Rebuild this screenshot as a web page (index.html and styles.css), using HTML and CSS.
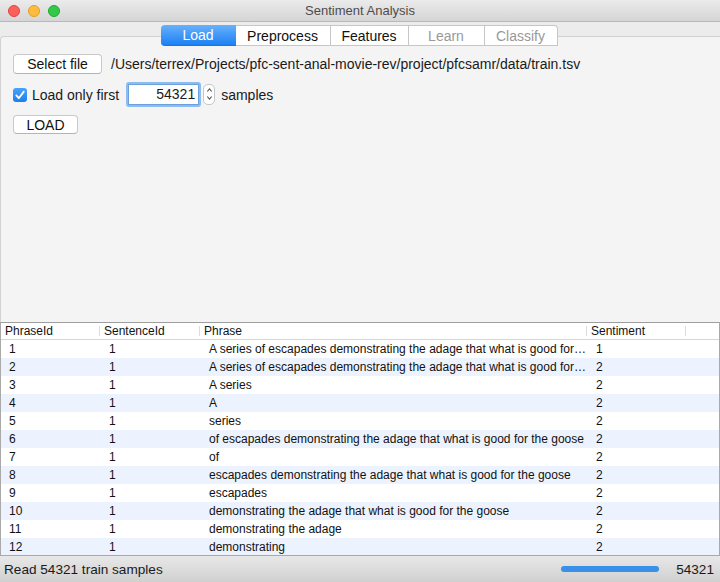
FILE: index.html
```html
<!DOCTYPE html>
<html>
<head>
<meta charset="utf-8">
<link rel="stylesheet" href="styles.css">
</head>
<body>
<div class="window">
  <div class="titlebar">
    <div class="lights">
      <span class="light red"></span><span class="light yellow"></span><span class="light green"></span>
    </div>
    <div class="title">Sentiment Analysis</div>
  </div>
  <div class="top">
    <div class="tabs">
      <div class="tab tab-load active">Load</div>
      <div class="tab tab-pre">Preprocess</div>
      <div class="tab tab-feat">Features</div>
      <div class="tab tab-learn disabled">Learn</div>
      <div class="tab tab-class disabled">Classify</div>
    </div>
    <div class="pane">
      <div class="row">
        <button class="btn btn-select">Select file</button>
        <span class="path">/Users/terrex/Projects/pfc-sent-anal-movie-rev/project/pfcsamr/data/train.tsv</span>
      </div>
      <div class="row row-check">
        <span class="checkbox"><svg width="14" height="14" viewBox="0 0 14 14"><path d="M3.3 7.4 L5.8 10.2 L10.8 3.6" fill="none" stroke="#fff" stroke-width="1.8" stroke-linecap="round" stroke-linejoin="round"/></svg></span>
        <span class="label">Load only first</span>
        <span class="focus"><span class="input">54321</span></span>
        <span class="spinner"><svg width="11" height="20" viewBox="0 0 11 20"><path d="M3.3 7.5 L5.5 4.8 L7.7 7.5" fill="none" stroke="#555" stroke-width="1.1"/><path d="M3.3 12.5 L5.5 15.2 L7.7 12.5" fill="none" stroke="#555" stroke-width="1.1"/></svg></span>
        <span class="label">samples</span>
      </div>
      <div class="row">
        <button class="btn btn-load">LOAD</button>
      </div>
    </div>
  </div>
  <div class="table">
    <div class="thead">
      <div class="th">PhraseId</div>
      <div class="th">SentenceId</div>
      <div class="th">Phrase</div>
      <div class="th">Sentiment</div>
      <div class="th th-last"></div>
    </div>
    <div class="tr"><div class="td">1</div><div class="td">1</div><div class="td phrase">A series of escapades demonstrating the adage that what is good for…</div><div class="td">1</div><div class="td"></div></div>
    <div class="tr"><div class="td">2</div><div class="td">1</div><div class="td phrase">A series of escapades demonstrating the adage that what is good for…</div><div class="td">2</div><div class="td"></div></div>
    <div class="tr"><div class="td">3</div><div class="td">1</div><div class="td phrase">A series</div><div class="td">2</div><div class="td"></div></div>
    <div class="tr"><div class="td">4</div><div class="td">1</div><div class="td phrase">A</div><div class="td">2</div><div class="td"></div></div>
    <div class="tr"><div class="td">5</div><div class="td">1</div><div class="td phrase">series</div><div class="td">2</div><div class="td"></div></div>
    <div class="tr"><div class="td">6</div><div class="td">1</div><div class="td phrase">of escapades demonstrating the adage that what is good for the goose</div><div class="td">2</div><div class="td"></div></div>
    <div class="tr"><div class="td">7</div><div class="td">1</div><div class="td phrase">of</div><div class="td">2</div><div class="td"></div></div>
    <div class="tr"><div class="td">8</div><div class="td">1</div><div class="td phrase">escapades demonstrating the adage that what is good for the goose</div><div class="td">2</div><div class="td"></div></div>
    <div class="tr"><div class="td">9</div><div class="td">1</div><div class="td phrase">escapades</div><div class="td">2</div><div class="td"></div></div>
    <div class="tr"><div class="td">10</div><div class="td">1</div><div class="td phrase">demonstrating the adage that what is good for the goose</div><div class="td">2</div><div class="td"></div></div>
    <div class="tr"><div class="td">11</div><div class="td">1</div><div class="td phrase">demonstrating the adage</div><div class="td">2</div><div class="td"></div></div>
    <div class="tr"><div class="td">12</div><div class="td">1</div><div class="td phrase">demonstrating</div><div class="td">2</div><div class="td"></div></div>
  </div>
  <div class="statusbar">
    <span class="status-text">Read 54321 train samples</span>
    <span class="progress"></span>
    <span class="status-count">54321</span>
  </div>
</div>
</body>
</html>
```

FILE: styles.css
```css
* { box-sizing: border-box; }
html, body { margin: 0; padding: 0; }
body {
  font-family: "Liberation Sans", Arial, sans-serif;
  font-size: 14px;
  color: #1a1a1a;
  background: #ececec;
}
.window {
  width: 720px;
  height: 582px;
  display: flex;
  flex-direction: column;
  overflow: hidden;
}
.titlebar {
  height: 22px;
  flex: none;
  background: linear-gradient(#ebebeb, #d5d5d5);
  border-bottom: 1px solid #b8b8b8;
  display: flex;
  align-items: center;
  position: relative;
}
.lights {
  display: flex;
  gap: 8px;
  padding-left: 8px;
}
.light {
  width: 12px;
  height: 12px;
  border-radius: 50%;
  display: block;
}
.red { background: #fc605c; border: 1px solid #e0443e; }
.yellow { background: #fdbc40; border: 1px solid #dea123; }
.green { background: #34c84a; border: 1px solid #1aab29; }
.title {
  position: absolute;
  left: 0; right: 0; top: 0;
  line-height: 21px;
  text-align: center;
  color: #4d4d4d;
  font-size: 13px;
}
.top {
  height: 300px;
  flex: none;
  background: #ececec;
  display: flex;
  flex-direction: column;
  padding-top: 3px;
}
.tabs {
  display: flex;
  justify-content: center;
  position: relative;
  z-index: 1;
  height: 21px;
  margin-left: -2px;
}
.tab {
  height: 21px;
  line-height: 20px;
  text-align: center;
  background: #fff;
  border: 1px solid #c6c6c6;
  border-left: none;
  color: #111;
}
.tab-load { width: 75px; border: none; border-radius: 4px 0 0 4px; }
.tab-pre { width: 95px; }
.tab-feat { width: 78px; }
.tab-learn { width: 76px; }
.tab-class { width: 73px; border-radius: 0 4px 0 0; }
.tab.active {
  background: linear-gradient(#68b1fa, #1c80f6);
  color: #fff;
  border-bottom: 1px solid #1775e6;
}
.tab.disabled { color: #999; }
.pane {
  flex: 1;
  margin-top: -10px;
  background: #f4f4f4;
  border-top: 1px solid #d2d2d2;
  border-left: 1px solid #d2d2d2;
  border-top-left-radius: 4px;
  padding: 17px 12px 0;
  display: flex;
  flex-direction: column;
  gap: 8px;
}
.row {
  display: flex;
  align-items: center;
}
.btn {
  font-family: inherit;
  font-size: 14px;
  color: #111;
  background: #fff;
  border: 1px solid #c9c9c9;
  border-bottom-color: #b4b4b4;
  border-radius: 4px;
  height: 20px;
  padding: 0;
  margin: 0;
  line-height: 18px;
}
.btn-select { width: 89px; }
.btn-load { width: 65px; height: 19px; }
.path { margin-left: 9px; }
.row-check { height: 25px; }
.checkbox {
  width: 14px;
  height: 14px;
  border-radius: 3px;
  background: linear-gradient(#4aa3f8, #1c7ff1);
  display: block;
}
.checkbox svg { display: block; }
.row-check .label { margin-left: 5px; }
.focus {
  margin-left: 7px;
  border: 2px solid #8fbcef;
  border-radius: 3px;
  padding: 0;
  display: block;
}
.input {
  display: block;
  width: 71px;
  height: 21px;
  background: #fff;
  border: 1px solid #6aa0dc;
  text-align: right;
  padding-right: 3px;
  line-height: 19px;
}
.spinner {
  margin-left: 2px;
  width: 12px;
  height: 21px;
  border: 1px solid #c6c6c6;
  border-radius: 5px;
  background: #fff;
  display: block;
}
.spinner svg { display: block; margin-top: -1px; }
.spinner + .label { margin-left: 6px; }
.table {
  flex: none;
  height: 233px;
  background: #fff;
  border-top: 1px solid #9e9e9e;
  border-left: 1px solid #a9a9a9;
  border-right: 1px solid #a9a9a9;
  font-size: 12px;
  color: #111;
}
.thead, .tr {
  display: grid;
  grid-template-columns: 99px 100px 387px 99px 1fr;
}
.thead {
  height: 17px;
  border-bottom: 1px solid #d6d6d6;
}
.th {
  padding-left: 4px;
  line-height: 16px;
  position: relative;
  white-space: nowrap;
}
.th::after {
  content: "";
  position: absolute;
  right: 0;
  top: 3px;
  bottom: 3px;
  width: 1px;
  background: #dcdcdc;
}
.th-last::after { display: none; }
.tr { height: 18px; line-height: 18px; }
.tr:nth-child(odd) { background: #edf3fe; }
.td {
  padding-left: 9px;
  white-space: nowrap;
  overflow: hidden;
}
.td:first-child { padding-left: 8px; }
.statusbar {
  flex: 1;
  background: linear-gradient(#e8e8e8, #d0d0d0);
  border-top: 1px solid #a9a9a9;
  display: flex;
  align-items: center;
  padding: 0 6px 0 4px;
  font-size: 13.6px;
}
.status-text { flex: 1; }
.progress {
  width: 98px;
  height: 6px;
  border-radius: 3px;
  background: #3a8fe6;
  display: block;
}
.status-count { margin-left: 17px; }
```
